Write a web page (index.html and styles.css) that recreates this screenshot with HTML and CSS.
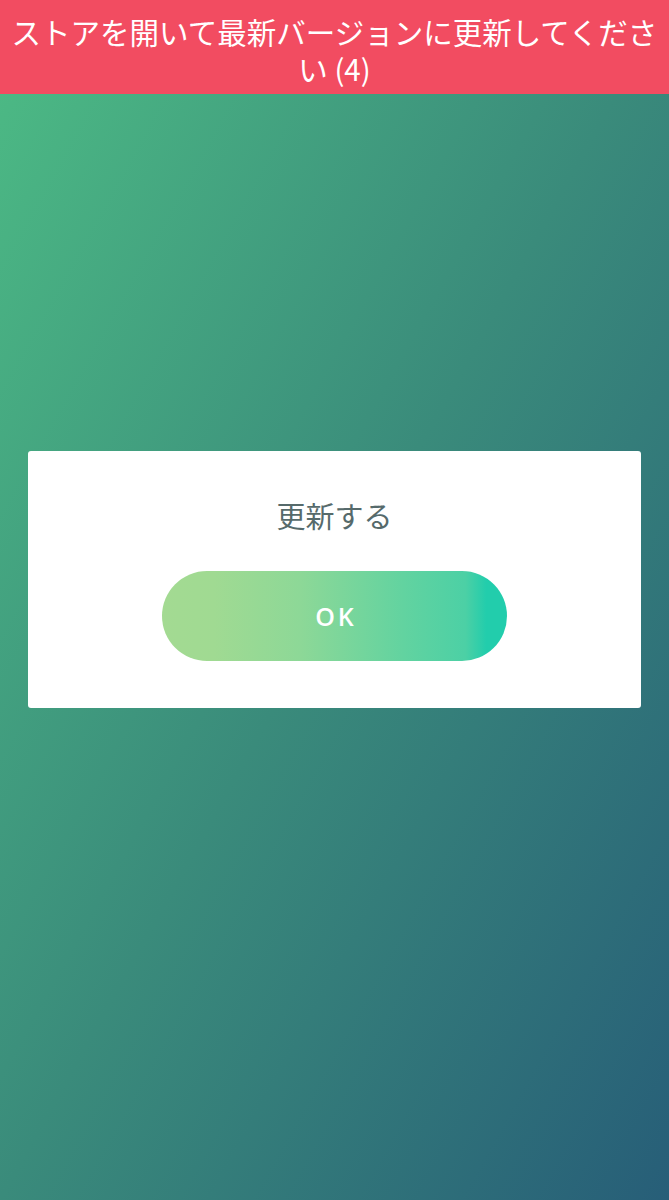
FILE: index.html
```html
<!DOCTYPE html>
<html lang="ja">
<head>
  <meta charset="UTF-8">
  <meta name="viewport" content="width=device-width, initial-scale=1.0">
  <title>更新する</title>
  <link rel="stylesheet" href="styles.css">
</head>
<body>

<div class="notice">ストアを開いて最新バージョンに更新してください (4)</div>

<main class="screen">
  <div class="dialog">
    <div class="dialog-title">更新する</div>
    <a class="ok-btn" href="#">OK</a>
  </div>
</main>

</body>
</html>
```

FILE: styles.css
```css
html, body {
  height: 100%;
}

body {
  font-family: "Noto Sans CJK JP", "Noto Sans", sans-serif;
  margin: 0;
  display: flex;
  flex-direction: column;
  background: linear-gradient(to bottom right, #4dbc85 0%, #3a8b7b 50%, #275e78 100%);
}

.notice {
  background: #f24c61;
  color: #fff;
  font-size: 29.5px;
  line-height: 36.5px;
  text-align: center;
  padding: 13px 4px 8px;
  height: 73px;
}

.screen {
  flex: 1;
  display: flex;
  flex-direction: column;
  align-items: center;
  padding-top: 357px;
}

.dialog {
  width: 613px;
  height: 257px;
  box-sizing: border-box;
  background: #fff;
  border-radius: 3px;
  display: flex;
  flex-direction: column;
  align-items: center;
  padding-top: 46px;
}

.dialog-title {
  font-size: 29px;
  line-height: 36px;
  color: #566a6b;
}

.ok-btn {
  margin-top: 38px;
  width: 345px;
  height: 90px;
  border-radius: 45px;
  display: flex;
  align-items: center;
  justify-content: center;
  text-decoration: none;
  color: #fff;
  font-family: "Open Sans", sans-serif;
  font-weight: 600;
  font-size: 25px;
  letter-spacing: 3px;
  padding-left: 3px;
  box-sizing: border-box;
  background: linear-gradient(90deg, #a3da92 0%, #a0da92 15%, #8dd897 40%, #62d3a0 70%, #4cd0a5 88%, #22cdac 94%, #22cdac 100%);
}
```
